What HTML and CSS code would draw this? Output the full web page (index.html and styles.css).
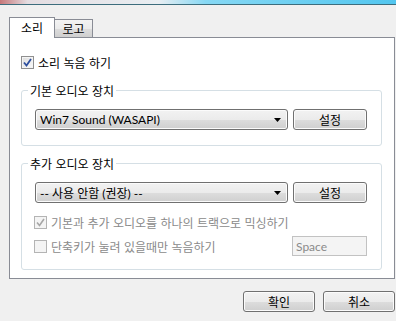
FILE: index.html
```html
<!DOCTYPE html>
<html lang="ko">
<head>
    <meta charset="UTF-8">
    <meta name="viewport" content="width=device-width, initial-scale=1.0">
    <title>녹음 설정</title>
    <link rel="stylesheet" href="styles.css">
</head>
<body>
    <div class="titlebar"></div>

    <div class="dialog">
        <!-- 탭 -->
        <div class="tabs">
            <div class="tab active">소리</div>
            <div class="tab">로고</div>
        </div>

        <div class="panel">
            <label class="check-row first">
                <span class="box">
                    <svg width="9" height="9" viewBox="0 0 9 9"><path d="M1 4.5 L3.5 7.5 L8 1" fill="none" stroke="#2e4f9e" stroke-width="1.8"/></svg>
                </span>
                <span>소리 녹음 하기</span>
            </label>

            <!-- 기본 장치 -->
            <fieldset class="group">
                <legend>기본 오디오 장치</legend>
                <div class="device-row">
                    <div class="combo">
                        <span class="latin">Win7 Sound (WASAPI)</span>
                        <svg class="arrow" width="7" height="4" viewBox="0 0 7 4"><path d="M0 0 H7 L3.5 4 Z" fill="#000"/></svg>
                    </div>
                    <button class="btn">설정</button>
                </div>
            </fieldset>

            <!-- 추가 장치 -->
            <fieldset class="group second">
                <legend>추가 오디오 장치</legend>
                <div class="device-row">
                    <div class="combo">
                        <span class="latin">-- 사용 안함 (권장) --</span>
                        <svg class="arrow" width="7" height="4" viewBox="0 0 7 4"><path d="M0 0 H7 L3.5 4 Z" fill="#000"/></svg>
                    </div>
                    <button class="btn">설정</button>
                </div>
                <div class="check-row disabled mix">
                    <span class="box">
                        <svg width="9" height="9" viewBox="0 0 9 9"><path d="M1 4.5 L3.5 7.5 L8 1" fill="none" stroke="#a6a6a6" stroke-width="1.6"/></svg>
                    </span>
                    <span>기본과 추가 오디오를 하나의 트랙으로 믹싱하기</span>
                </div>
                <div class="check-row disabled hotkey-row">
                    <span class="box"></span>
                    <span>단축키가 눌려 있을때만 녹음하기</span>
                    <input class="hotkey latin" type="text" value="Space" disabled>
                </div>
            </fieldset>
        </div>

        <div class="actions">
            <button class="btn">확인</button>
            <button class="btn">취소</button>
        </div>
    </div>
</body>
</html>
```

FILE: styles.css
```css
body {
    margin: 0;
    background-color: #f0f0f0;
    font-family: "Noto Sans CJK KR", sans-serif;
    font-size: 12px;
    color: #000;
}
.latin {
    font-family: Lato, "Noto Sans CJK KR", sans-serif;
}
.titlebar {
    height: 4px;
    background: linear-gradient(to right, #c7787a 0, #e4dde1 7%, #e9eef2 40%, #86d8f4 52%, #52c6ef 100%);
    border-bottom: 1px solid #3d6d7d;
}
.dialog {
    padding-top: 12px;
}

/* 탭 */
.tabs {
    display: flex;
    align-items: flex-end;
    height: 20px;
    margin-left: 9px;
}
.tab {
    box-sizing: border-box;
    width: 39px;
    height: 18px;
    margin-left: -1px;
    border: 1px solid #898c95;
    border-bottom: none;
    text-align: center;
    line-height: 17px;
    background: linear-gradient(#f3f3f3, #ebebeb 50%, #dddddd 51%, #cfcfcf);
}
.tab.active {
    position: relative;
    z-index: 1;
    width: 46px;
    height: 21px;
    margin-left: 0;
    margin-bottom: -1px;
    line-height: 19px;
    background: #fff;
}

.panel {
    margin: 0 1px 0 9px;
    padding: 17px 12px 8px 11px;
    border: 1px solid #898c95;
    background: #fff;
}

/* 체크박스 */
.check-row {
    display: flex;
    align-items: center;
    gap: 4px;
    height: 15px;
}
.box {
    box-sizing: border-box;
    width: 13px;
    height: 13px;
    border: 1px solid #8f8f8f;
    background: linear-gradient(135deg, #dcdcdc, #fbfbfb);
    box-shadow: inset 0 0 0 1px #f4f4f4;
    display: flex;
    align-items: center;
    justify-content: center;
}
.disabled {
    color: #8a8a8a;
}
.disabled .box {
    border-color: #b4b4b4;
    background: #f4f4f4;
    box-shadow: none;
}

/* 그룹 */
.group {
    margin: 13px 0 0;
    padding: 11px 14px 15px 13px;
    border: 1px solid #d5dfe5;
    border-radius: 3px;
    min-width: 0;
}
.group legend {
    margin-left: -7px;
    padding: 0 2px;
    line-height: 15px;
}
.group.second {
    margin-top: 10px;
    padding-top: 11px;
    padding-bottom: 13px;
}

.device-row {
    display: flex;
    gap: 5px;
}
.combo, .btn {
    box-sizing: border-box;
    height: 21px;
    border: 1px solid #707070;
    border-radius: 3px;
    background: linear-gradient(#f2f2f2, #ebebeb 50%, #dddddd 51%, #cfcfcf);
    box-shadow: inset 0 0 0 1px #fbfbfb;
    font: inherit;
    color: #000;
}
.combo {
    flex: 1;
    display: flex;
    align-items: center;
    justify-content: space-between;
    padding: 0 6px 0 4px;
}
.btn {
    width: 74px;
    padding: 0;
}

.mix {
    margin: 12px 0 0 -1px;
}
.hotkey-row {
    height: 20px;
    margin: 6px 0 0 -1px;
}
.hotkey {
    box-sizing: border-box;
    width: 75px;
    height: 20px;
    margin-left: auto;
    padding: 0 3px;
    border: 1px solid #c2c2c2;
    background: #f4f4f4;
    font-family: Lato, sans-serif;
    font-size: 12px;
    color: #8a8a8a;
}

.actions {
    display: flex;
    justify-content: flex-end;
    gap: 8px;
    margin: 12px 1px 0 0;
}
.actions .btn {
    width: 72px;
}
```
